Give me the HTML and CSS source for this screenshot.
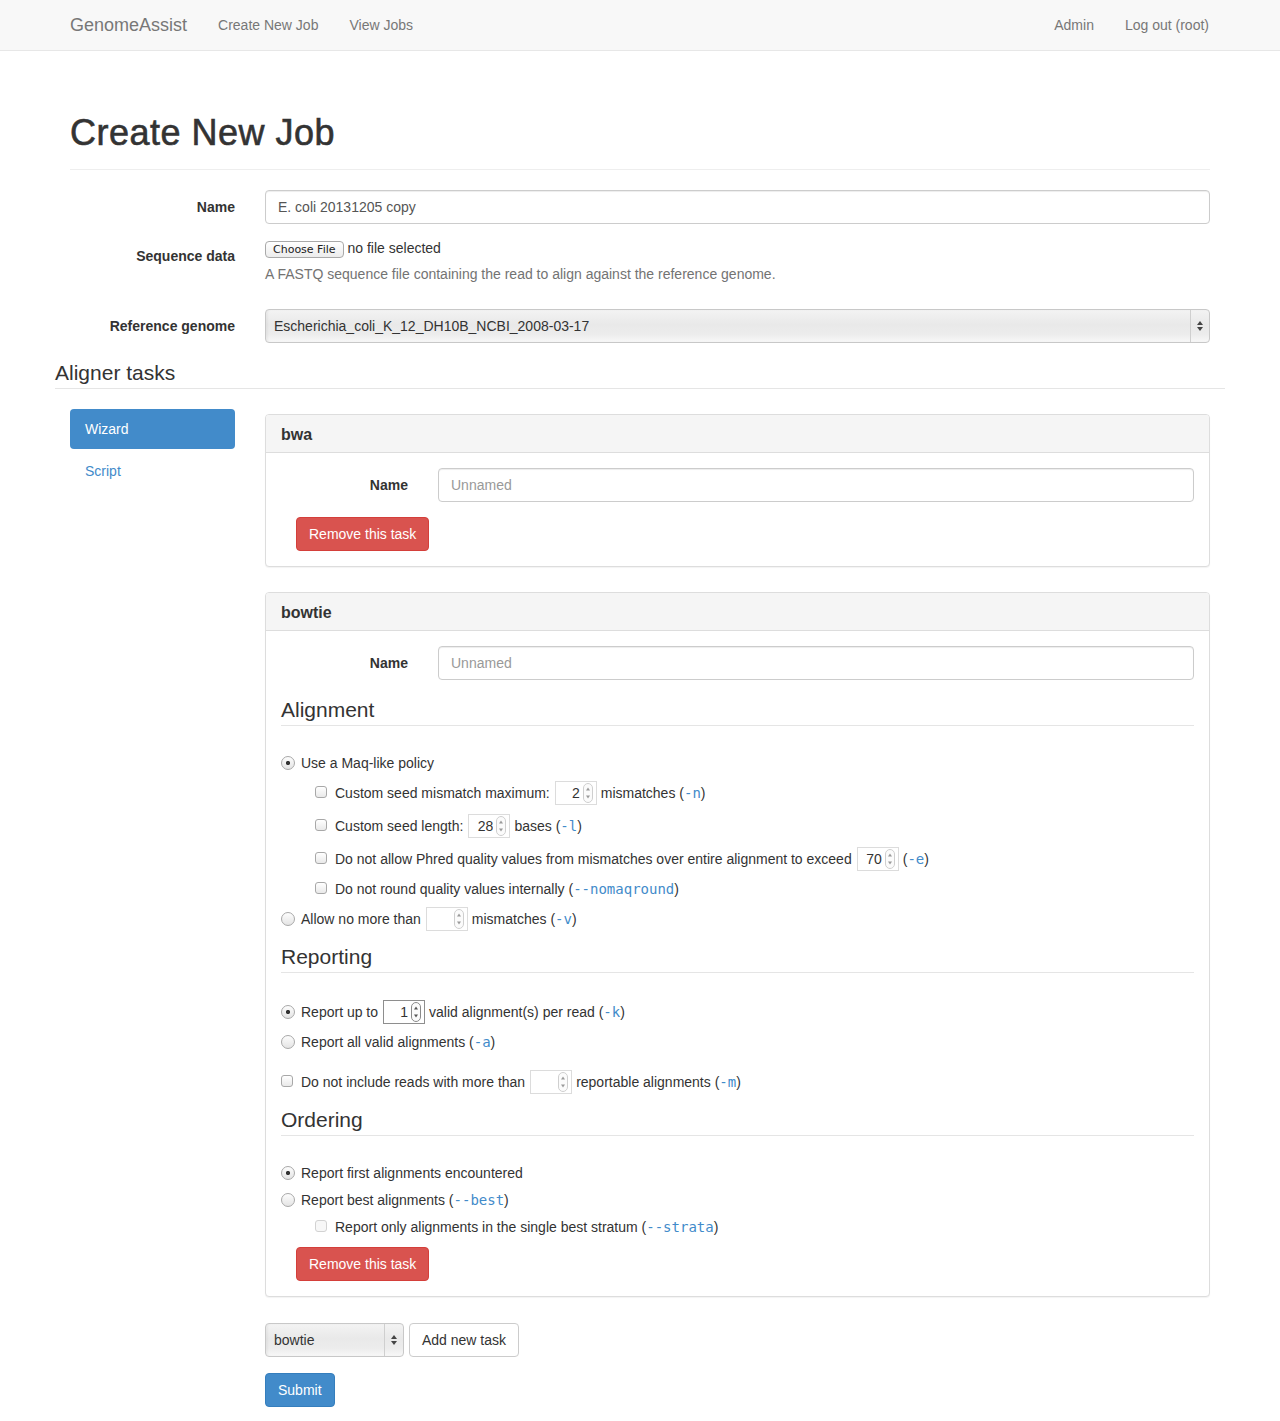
FILE: index.html
```html
<!DOCTYPE html>
<html lang="en">
<head>
<meta charset="utf-8">
<title>GenomeAssist - Create New Job</title>
<link rel="stylesheet" href="styles.css">
</head>
<body>
<header class="navbar">
  <div class="nav-inner">
    <a class="brand" href="#">GenomeAssist</a>
    <nav class="nav-links">
      <a href="#">Create New Job</a>
      <a href="#">View Jobs</a>
    </nav>
    <nav class="nav-links nav-right">
      <a href="#">Admin</a>
      <a href="#">Log out (root)</a>
    </nav>
  </div>
</header>

<main class="container">
  <div class="page-header"><h1>Create New Job</h1></div>

  <form class="form">
    <div class="form-group">
      <label class="ctl-label">Name</label>
      <div><input class="form-control" type="text" value="E. coli 20131205 copy"></div>
    </div>

    <div class="form-group seq-group">
      <label class="ctl-label">Sequence data</label>
      <div>
        <div class="file-row"><span class="file-btn">Choose File</span><span>no file selected</span></div>
        <p class="help">A FASTQ sequence file containing the read to align against the reference genome.</p>
      </div>
    </div>

    <div class="form-group">
      <label class="ctl-label">Reference genome</label>
      <div class="select-wrap">
        <select class="mac-select"><option>Escherichia_coli_K_12_DH10B_NCBI_2008-03-17</option></select>
        <span class="sel-arrows"><svg width="8" height="12" viewBox="0 0 8 12"><path d="M4 1 L7 5 L1 5 Z" fill="#444"/><path d="M4 11 L7 7 L1 7 Z" fill="#444"/></svg></span>
      </div>
    </div>

    <div class="legend">Aligner tasks</div>

    <div class="tasks-row">
      <ul class="pills">
        <li class="active"><a href="#">Wizard</a></li>
        <li><a href="#">Script</a></li>
      </ul>

      <div class="panels">
        <section class="panel">
          <div class="panel-heading"><h3 class="panel-title">bwa</h3></div>
          <div class="panel-body">
            <div class="pgroup">
              <label class="ctl-label">Name</label>
              <div><input class="form-control" type="text" placeholder="Unnamed"></div>
            </div>
            <button type="button" class="btn btn-danger">Remove this task</button>
          </div>
        </section>

        <section class="panel">
          <div class="panel-heading"><h3 class="panel-title">bowtie</h3></div>
          <div class="panel-body">
            <div class="pgroup">
              <label class="ctl-label">Name</label>
              <div><input class="form-control" type="text" placeholder="Unnamed"></div>
            </div>

            <div class="sublegend">Alignment</div>
            <div class="opts">
              <div class="opt"><input class="rd" type="radio" name="al" checked><span>Use a Maq-like policy</span></div>
              <div class="opt tall sub"><input class="cb" type="checkbox"><span>Custom seed mismatch maximum:</span><span class="num"><input type="text" value="2" readonly><svg class="spin" width="10" height="20" viewBox="0 0 10 20"><rect x="0.5" y="0.5" width="9" height="19" rx="4.5" fill="#fbfbfb" stroke="#cfcfcf"/><path d="M5 4.5 L7 7.5 L3 7.5 Z" fill="#9a9a9a"/><path d="M5 15.5 L7 12.5 L3 12.5 Z" fill="#9a9a9a"/></svg></span><span>mismatches (<code class="flag">-n</code>)</span></div>
              <div class="opt tall sub gap9"><input class="cb" type="checkbox"><span>Custom seed length:</span><span class="num"><input type="text" value="28" readonly><svg class="spin" width="10" height="20" viewBox="0 0 10 20"><rect x="0.5" y="0.5" width="9" height="19" rx="4.5" fill="#fbfbfb" stroke="#cfcfcf"/><path d="M5 4.5 L7 7.5 L3 7.5 Z" fill="#9a9a9a"/><path d="M5 15.5 L7 12.5 L3 12.5 Z" fill="#9a9a9a"/></svg></span><span>bases (<code class="flag">-l</code>)</span></div>
              <div class="opt tall sub gap9"><input class="cb" type="checkbox"><span>Do not allow Phred quality values from mismatches over entire alignment to exceed</span><span class="num"><input type="text" value="70" readonly><svg class="spin" width="10" height="20" viewBox="0 0 10 20"><rect x="0.5" y="0.5" width="9" height="19" rx="4.5" fill="#fbfbfb" stroke="#cfcfcf"/><path d="M5 4.5 L7 7.5 L3 7.5 Z" fill="#9a9a9a"/><path d="M5 15.5 L7 12.5 L3 12.5 Z" fill="#9a9a9a"/></svg></span><span>(<code class="flag">-e</code>)</span></div>
              <div class="opt sub"><input class="cb" type="checkbox"><span>Do not round quality values internally (<code class="flag">--nomaqround</code>)</span></div>
              <div class="opt tall"><input class="rd" type="radio" name="al"><span>Allow no more than</span><span class="num"><input type="text" value="" readonly><svg class="spin" width="10" height="20" viewBox="0 0 10 20"><rect x="0.5" y="0.5" width="9" height="19" rx="4.5" fill="#fbfbfb" stroke="#cfcfcf"/><path d="M5 4.5 L7 7.5 L3 7.5 Z" fill="#9a9a9a"/><path d="M5 15.5 L7 12.5 L3 12.5 Z" fill="#9a9a9a"/></svg></span><span>mismatches (<code class="flag">-v</code>)</span></div>
            </div>

            <div class="sublegend">Reporting</div>
            <div class="opts">
              <div class="opt tall"><input class="rd" type="radio" name="rp" checked><span>Report up to</span><span class="num num-focus"><input type="text" value="1" readonly><svg class="spin" width="10" height="20" viewBox="0 0 10 20"><rect x="0.5" y="0.5" width="9" height="19" rx="4.5" fill="#fbfbfb" stroke="#8a8a8a"/><path d="M5 4.5 L7 7.5 L3 7.5 Z" fill="#555"/><path d="M5 15.5 L7 12.5 L3 12.5 Z" fill="#555"/></svg></span><span>valid alignment(s) per read (<code class="flag">-k</code>)</span></div>
              <div class="opt"><input class="rd" type="radio" name="rp"><span>Report all valid alignments (<code class="flag">-a</code>)</span></div>
              <div class="opt tall gap18"><input class="cb" type="checkbox"><span>Do not include reads with more than</span><span class="num"><input type="text" value="" readonly><svg class="spin" width="10" height="20" viewBox="0 0 10 20"><rect x="0.5" y="0.5" width="9" height="19" rx="4.5" fill="#fbfbfb" stroke="#cfcfcf"/><path d="M5 4.5 L7 7.5 L3 7.5 Z" fill="#9a9a9a"/><path d="M5 15.5 L7 12.5 L3 12.5 Z" fill="#9a9a9a"/></svg></span><span>reportable alignments (<code class="flag">-m</code>)</span></div>
            </div>

            <div class="sublegend">Ordering</div>
            <div class="opts ordering">
              <div class="opt"><input class="rd" type="radio" name="or" checked><span>Report first alignments encountered</span></div>
              <div class="opt"><input class="rd" type="radio" name="or"><span>Report best alignments (<code class="flag">--best</code>)</span></div>
              <div class="opt sub"><input class="cb" type="checkbox" disabled><span>Report only alignments in the single best stratum (<code class="flag">--strata</code>)</span></div>
            </div>
            <button type="button" class="btn btn-danger btn-last">Remove this task</button>
          </div>
        </section>

        <div class="add-row">
          <div class="select-wrap small-select">
            <select class="mac-select"><option>bowtie</option></select>
            <span class="sel-arrows"><svg width="8" height="12" viewBox="0 0 8 12"><path d="M4 1 L7 5 L1 5 Z" fill="#444"/><path d="M4 11 L7 7 L1 7 Z" fill="#444"/></svg></span>
          </div>
          <button type="button" class="btn btn-default">Add new task</button>
        </div>
        <button type="submit" class="btn btn-primary submit">Submit</button>
      </div>
    </div>
  </form>
</main>
</body>
</html>
```

FILE: styles.css
```css
* { box-sizing: border-box; }

body {
  margin: 0;
  font-family: "Liberation Sans", Arial, Helvetica, sans-serif;
  font-size: 14px;
  line-height: 20px;
  color: #333;
  background: #fff;
  padding-bottom: 15px;
}

a { text-decoration: none; }

/* Navbar */
.navbar {
  height: 51px;
  background: #f8f8f8;
  border-bottom: 1px solid #e7e7e7;
}
.nav-inner {
  width: 1140px;
  margin: 0 auto;
  display: flex;
  align-items: center;
  height: 50px;
}
.brand {
  font-size: 18px;
  line-height: 20px;
  color: #777;
  margin-right: 16px;
}
.nav-links { display: flex; }
.nav-links a {
  color: #777;
  padding: 15px 15px;
  line-height: 20px;
}
.nav-links a:first-child + a { padding-left: 16px; }
.nav-right { margin-left: auto; margin-right: -14px; }
.nav-right a:first-child { padding-right: 16px; }
.nav-right a:first-child + a { padding-left: 15px; }

/* Container */
.container {
  width: 1140px;
  margin: 0 auto;
}

.page-header {
  margin: 62px 0 20px;
  padding-bottom: 6px;
  border-bottom: 1px solid #eee;
}
.page-header h1 {
  margin: 0 0 10px;
  font-size: 36px;
  line-height: 40px;
  font-weight: normal;
  letter-spacing: 0.5px;
  color: #333;
  -webkit-text-stroke: 0.6px #333;
}

/* Form groups */
.form-group {
  display: grid;
  grid-template-columns: 165px 945px;
  column-gap: 30px;
  margin-bottom: 15px;
}
.ctl-label {
  text-align: right;
  font-weight: bold;
  padding-top: 7px;
  line-height: 20px;
}
.form-control {
  display: block;
  width: 100%;
  height: 34px;
  padding: 6px 12px;
  font-family: inherit;
  font-size: 14px;
  line-height: 20px;
  color: #555;
  background: #fff;
  border: 1px solid #ccc;
  border-radius: 4px;
  box-shadow: inset 0 1px 1px rgba(0,0,0,.075);
}
.form-control::placeholder { color: #999; }

.file-row {
  display: flex;
  align-items: center;
  height: 20px;
  gap: 4px;
}
.file-btn {
  display: inline-block;
  height: 17px;
  padding: 0 7px;
  font-family: "DejaVu Sans", sans-serif;
  font-size: 11px;
  line-height: 15px;
  color: #222;
  border: 1px solid #a9a9a9;
  border-radius: 4px;
  background: linear-gradient(#ffffff, #ececec);
}
.file-row span:last-child { margin-top: -3px; }
.help {
  margin: 5px 0 10px;
  color: #737373;
}

/* Mac style select */
.select-wrap {
  position: relative;
  height: 34px;
}
.mac-select {
  -webkit-appearance: none;
  appearance: none;
  width: 100%;
  height: 34px;
  padding: 0 8px;
  font-family: inherit;
  font-size: 14px;
  color: #333;
  border: 1px solid #c8c8c8;
  border-radius: 4px;
  background: linear-gradient(#f3f3f3 0%, #e9e9e9 45%, #ececec 75%, #f8f8f8 100%);
  box-shadow: inset 2px 0 2px rgba(0,0,0,.04);
}
.sel-arrows {
  position: absolute;
  right: 1px;
  top: 1px;
  width: 19px;
  height: 32px;
  border-left: 1px solid #cfcfcf;
  display: flex;
  align-items: center;
  justify-content: center;
  pointer-events: none;
}

/* Legend */
.legend {
  margin: 0 -15px 20px;
  font-size: 21px;
  line-height: 30px;
  border-bottom: 1px solid #e5e5e5;
  color: #333;
}

/* Tasks row */
.tasks-row {
  display: grid;
  grid-template-columns: 165px 945px;
  column-gap: 30px;
}
.pills {
  list-style: none;
  margin: 0;
  padding: 0;
}
.pills li + li { margin-top: 2px; }
.pills a {
  display: block;
  padding: 10px 15px;
  line-height: 20px;
  color: #428bca;
  border-radius: 4px;
}
.pills li.active a {
  background: #428bca;
  color: #fff;
}

.panels { padding-top: 5px; }
.panel {
  border: 1px solid #ddd;
  border-radius: 4px;
  margin-bottom: 25px;
  box-shadow: 0 1px 1px rgba(0,0,0,.05);
  background: #fff;
}
.panel-heading {
  padding: 10px 15px;
  background: #f5f5f5;
  border-bottom: 1px solid #ddd;
  border-radius: 3px 3px 0 0;
}
.panel-title {
  margin: 0;
  font-size: 16px;
  line-height: 17px;
  padding-top: 1px;
  margin-bottom: -1px;
  font-weight: bold;
  color: #333;
}
.panel-body { padding: 15px; }
.pgroup {
  display: grid;
  grid-template-columns: 127px 756px;
  column-gap: 30px;
  margin-bottom: 15px;
}

/* Buttons */
.btn {
  display: inline-block;
  height: 34px;
  padding: 6px 12px;
  font-family: inherit;
  font-size: 14px;
  line-height: 20px;
  border: 1px solid transparent;
  border-radius: 4px;
  cursor: pointer;
}
.btn-danger {
  margin-left: 15px;
  color: #fff;
  background: #d9534f;
  border-color: #d43f3a;
}
.btn-last { margin-top: 10px; }
.btn-default {
  color: #333;
  background: #fff;
  border-color: #ccc;
}
.btn-primary {
  color: #fff;
  background: #428bca;
  border-color: #357ebd;
}

/* Sub legends */
.sublegend {
  margin: 11px 0 27px;
  font-size: 21px;
  line-height: 30px;
  border-bottom: 1px solid #e5e5e5;
  color: #333;
}

.opts .opt + .opt { margin-top: 8px; }
.opt {
  display: flex;
  align-items: center;
  height: 20px;
  white-space: nowrap;
}
.opt.tall { height: 24px; }
.opts .opt.gap9 { margin-top: 9px; }
.opts .opt.gap18 { margin-top: 18px; }
.ordering .opt + .opt { margin-top: 7px; }
.opt.sub { padding-left: 34px; }

.rd {
  -webkit-appearance: none;
  appearance: none;
  flex: none;
  width: 14px;
  height: 14px;
  margin: 0 6px 0 0;
  border: 1px solid #a8a8a8;
  border-radius: 50%;
  background: linear-gradient(#fdfdfd, #e4e4e4);
}
.rd:checked {
  background: radial-gradient(circle, #333 0 1.8px, transparent 2.4px), linear-gradient(#fdfdfd, #e4e4e4);
}
.cb {
  -webkit-appearance: none;
  appearance: none;
  flex: none;
  width: 12px;
  height: 12px;
  margin: -3px 8px 0 0;
  border: 1px solid #a8a8a8;
  border-radius: 3px;
  background: linear-gradient(#ffffff, #e9e9e9);
}
.cb:disabled {
  border-color: #d2d2d2;
  background: #f7f7f7;
}

.num {
  position: relative;
  flex: none;
  display: inline-block;
  width: 42px;
  height: 24px;
  margin: 0 4px 0 5px;
}
.num input {
  width: 100%;
  height: 100%;
  padding: 0 16px 0 4px;
  font-family: inherit;
  font-size: 14px;
  color: #333;
  text-align: right;
  border: 1px solid #dcdcdc;
  background: #fff;
  outline: none;
}
.num-focus input { border-color: #8e8e8e; }
.spin {
  position: absolute;
  right: 4px;
  top: 2px;
}

.flag {
  font-family: "DejaVu Sans Mono", monospace;
  font-size: 14px;
  color: #428bca;
}

/* Bottom */
.add-row {
  display: flex;
  gap: 5px;
  margin-top: 26px;
}
.small-select { width: 139px; }
.small-select .mac-select { padding: 0 8px; }
.submit { margin-top: 16px; }
```
